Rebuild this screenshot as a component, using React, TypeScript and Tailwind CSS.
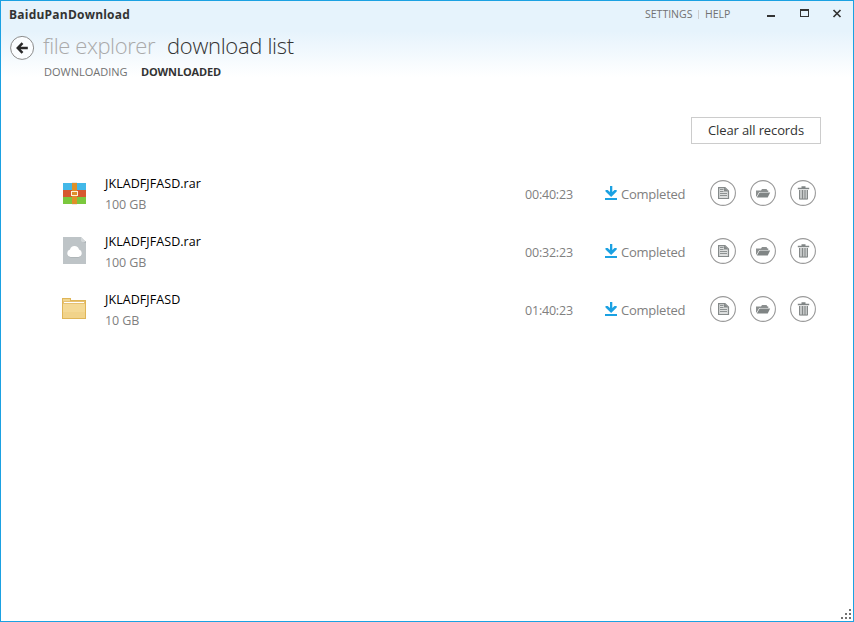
import React from 'react';

type FileKind = 'archive' | 'cloud' | 'folder';

interface DownloadItem {
  name: string;
  size: string;
  time: string;
  kind: FileKind;
}

const items: DownloadItem[] = [
  { name: 'JKLADFJFASD.rar', size: '100 GB', time: '00:40:23', kind: 'archive' },
  { name: 'JKLADFJFASD.rar', size: '100 GB', time: '00:32:23', kind: 'cloud' },
  { name: 'JKLADFJFASD', size: '10 GB', time: '01:40:23', kind: 'folder' },
];

function FileIcon({ kind }: { kind: FileKind }) {
  if (kind === 'archive') {
    return (
      <svg width="26" height="30" viewBox="0 0 26 30" shapeRendering="crispEdges">
        <path d="M2 5h23v7H2z" fill="#43b8e8" />
        <path d="M2 12h23v7H2z" fill="#d6592f" />
        <path d="M2 19h23v7H2z" fill="#7bc83d" />
        <path d="M11 5h5v21h-5z" fill="#df9029" />
        <path d="M11 4h5v1h-5zM11 26h5v1h-5z" fill="#e9e9e9" />
        <path d="M10 13h7v5h-7zM11 14v3h5v-3z" fill="#fff0d8" fillRule="evenodd" />
      </svg>
    );
  }
  if (kind === 'cloud') {
    return (
      <svg width="26" height="30" viewBox="0 0 26 30">
        <path d="M2 1h18l5 5v22H2z" fill="#bec4c7" />
        <path d="M20 5h5v2z" fill="#a5adb1" />
        <path d="M20 1l5 5h-4l-1-1z" fill="#d3d8da" />
        <path d="M10 22a4 4 0 0 1-1-7.5a4.6 4.6 0 0 1 9 0A4 4 0 0 1 17 22z" fill="#9fa7aa" opacity=".5" />
        <path d="M9.5 21a3.8 3.8 0 0 1-.5-7.4a4.6 4.6 0 0 1 9 0A3.8 3.8 0 0 1 17.500 21z" fill="#fff" />
      </svg>
    );
  }
  return (
    <svg width="26" height="30" viewBox="0 0 26 30" shapeRendering="crispEdges">
      <path d="M1 4h9v2h15v19H1z" fill="#dfb557" />
      <path d="M2 5h7v2H2z" fill="#f0d58f" />
      <path d="M2 7h22v3H2z" fill="#e6c172" />
      <path d="M3 8h20v1H3z" fill="#fff" />
      <path d="M2 10h22v14H2z" fill="#f4d995" />
      <path d="M2 18h22v6H2z" fill="#f1d38a" />
    </svg>
  );
}

function RoundButton({ label, children }: { label: string; children: React.ReactNode }) {
  return (
    <button aria-label={label} className="block size-[26px]">
      <svg width="26" height="26" viewBox="0 0 26 26">
        <circle cx="13" cy="13" r="12.4" fill="#fff" stroke="#999" strokeWidth="1.1" />
        {children}
      </svg>
    </button>
  );
}

function DownloadRow({ item }: { item: DownloadItem }) {
  return (
    <li className="flex h-[58px] items-center">
      <FileIcon kind={item.kind} />
      <div className="ml-[18px] mt-[2px] flex w-[420px] flex-col gap-[3px] text-[12.5px] leading-[18px]">
        <span className="tracking-[0.06px] text-black">{item.name}</span>
        <span className="tracking-[-0.1px] text-[#808080]">{item.size}</span>
      </div>
      <span className="mt-[3px] w-[80px] text-[12.5px] leading-[18px] tracking-[-0.2px] text-[#808080]">{item.time}</span>
      <svg className="mr-[3px]" width="13" height="16" viewBox="0 0 13 16">
        <path d="M0 13h12v2H0z" fill="#1ba1e2" />
        <path d="M5 1h2.300v6l2.200-2h2.200v1.500L6.150 12L.5 6.500V5h2.200L5 7z" fill="#1ba1e2" />
      </svg>
      <span className="mt-[1px] w-[89px] text-[13px] leading-[18px] tracking-[-0.24px] text-[#808080]">Completed</span>
      <div className="flex gap-[14px]">
        <RoundButton label="Open file">
          <path d="M8.600 7.600h6.400l3.500 3.300v7.600h-9.900z" fill="#dcdede" stroke="#858a8a" strokeWidth="1.200" />
          <path d="M14 7.500v4h4.500z" fill="#858a8a" />
          <path d="M10 9.500h3.500M10 11.500h3.500M10 13.500h7M10 15.500h7" stroke="#8d9292" />
        </RoundButton>
        <RoundButton label="Open folder">
          <path d="M6 16.500V10.500h5L12 9h4.500l1 1.500h.8V12H9.200L6.600 16.500z" fill="#8b8f8f" />
          <path d="M9.600 12.400h10.600L17.700 17.500H6.800z" fill="#808585" />
        </RoundButton>
        <RoundButton label="Delete">
          <path d="M7.800 8.500h11.400M11.500 7h4" stroke="#808585" strokeWidth="1.300" />
          <path d="M9 10h9v9.500H9z" fill="#c5c8c8" />
          <path d="M9.500 10v9h8v-9M12.500 10v9M15 10v9" fill="none" stroke="#858989" />
        </RoundButton>
      </div>
    </li>
  );
}

export default function App() {
  return (
    <div className="relative flex h-[622px] w-[854px] flex-col overflow-hidden border border-[#1ba1e2] bg-white bg-[linear-gradient(#e6f3fc_0px,#e6f3fc_30px,#ffffff_76px)] font-['Open_Sans','Noto_Sans',sans-serif]">
      <header className="flex h-[29px] items-start pl-2 pt-[5px]">
        <h1 className="pt-px text-[12px] font-bold leading-4 tracking-[0.22px] text-[#333]">BaiduPanDownload</h1>
        <nav className="ml-auto flex items-center text-[10.5px] leading-4 text-[#717171]">
          <span className="w-[53px]">SETTINGS</span>
          <span className="mr-[6px] h-[9px] w-px bg-[#ccc]" />
          <span className="w-[60px]">HELP</span>
        </nav>
        <svg width="88" height="16" viewBox="0 0 88 16" fill="none">
          <path d="M2 9h8v2H2z" fill="#333" />
          <path d="M35 3h9v8h-9zM36 5h7v5h-7z" fill="#333" fillRule="evenodd" />
          <path d="M68.500 4l7 7M75.500 4l-7 7" stroke="#333" strokeWidth="1.7" />
        </svg>
      </header>
      <div className="flex h-[34px] pl-[9px]">
        <button aria-label="Back" className="mt-[5px] size-[25px]">
          <svg width="25" height="25" viewBox="0 0 25 25" fill="none">
            <circle cx="12.1" cy="12.900" r="11.500" stroke="#8c8c8c" fill="#fbfdff" />
            <path d="M17.800 13H8M12.500 8.200L7.800 13l4.700 4.800" stroke="#292929" strokeWidth="2.500" />
          </svg>
        </button>
        <h2 className="ml-[8px] w-[124px] whitespace-nowrap text-[22px] font-light leading-[30px] tracking-[-0.42px] text-[#aaa]">file explorer</h2>
        <h2 className="whitespace-nowrap text-[22px] font-light leading-[30px] tracking-[-0.31px] text-[#333]">download list</h2>
      </div>
      <div className="flex h-[53px] pl-[43px] text-[11px] leading-4">
        <span className="w-[97px] text-[#717171]">DOWNLOADING</span>
        <span className="font-bold tracking-[-0.15px] text-[#333]">DOWNLOADED</span>
      </div>
      <div className="flex justify-end pr-8">
        <button className="h-[27px] w-[130px] border border-[#ccc] bg-white text-[13px] tracking-[-0.12px] text-[#333]">Clear all records</button>
      </div>
      <ul className="mt-[20px] pl-[60px]">
        {items.map((item, i) => (
          <DownloadRow key={i} item={item} />
        ))}
      </ul>
      <svg className="absolute bottom-[2px] right-[2px]" width="10" height="10" viewBox="0 0 10 10" shapeRendering="crispEdges">
        <path d="M8 0h2v2H8zM4 4h2v2H4zM8 4h2v2H8zM0 8h2v2H0zM4 8h2v2H4zM8 8h2v2H8z" fill="#717171" />
      </svg>
    </div>
  );
}
